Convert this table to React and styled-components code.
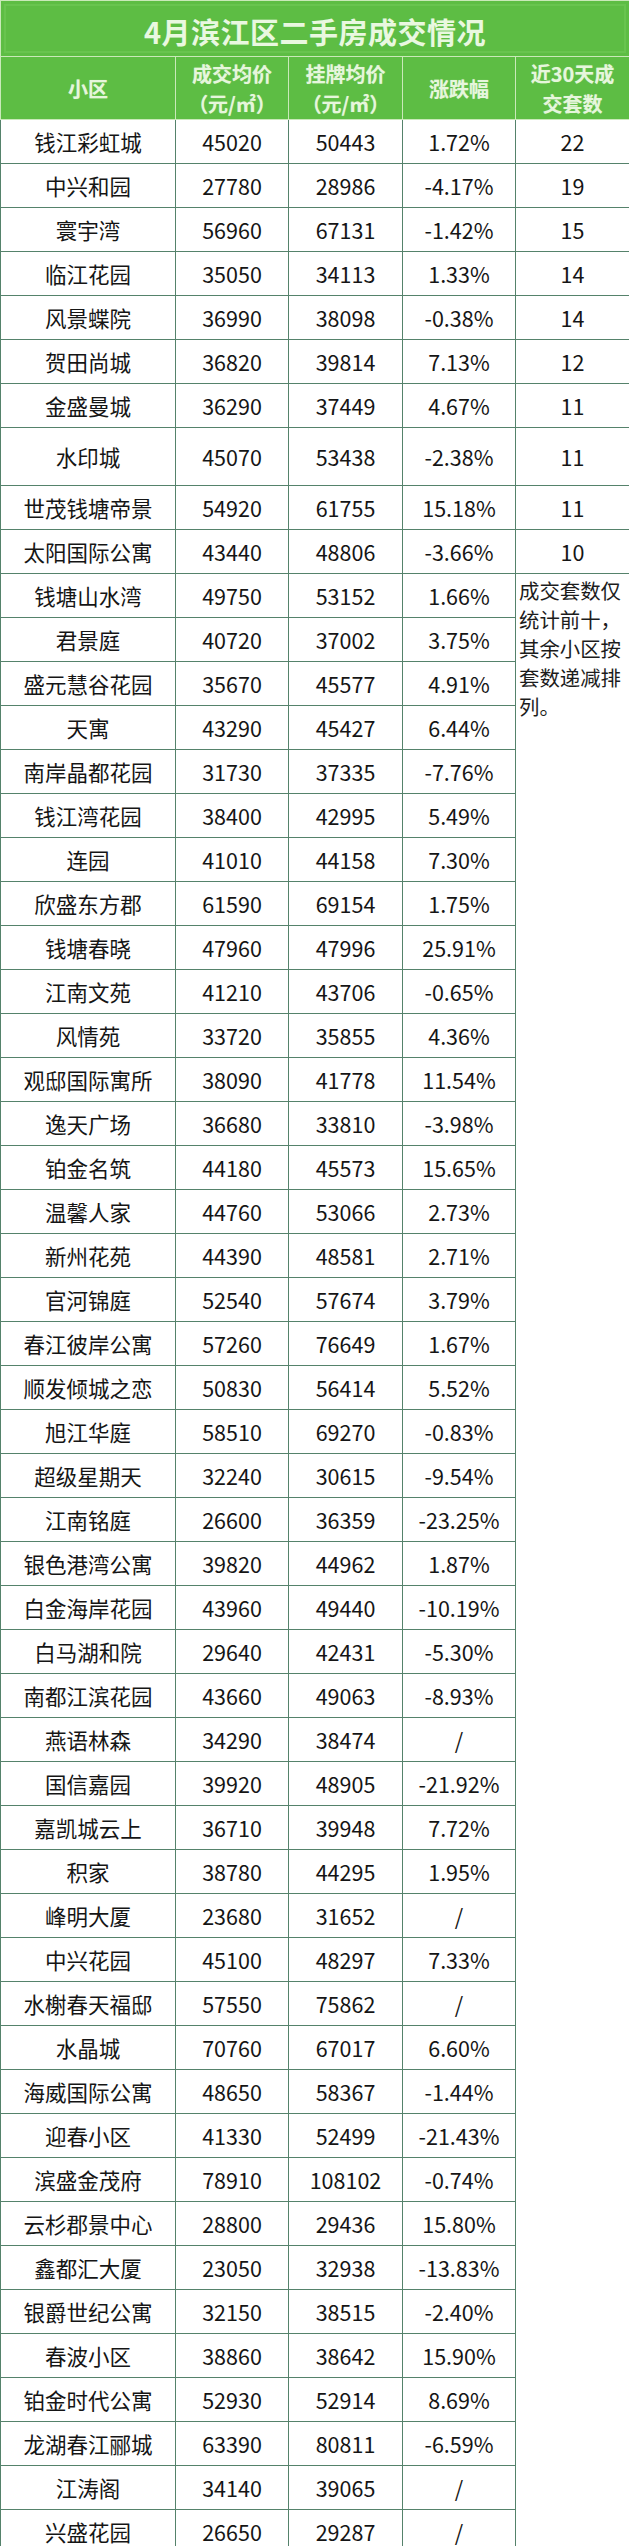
import React from "react";
import styled, { createGlobalStyle } from "styled-components";

const Global = createGlobalStyle`
  html, body { margin: 0; padding: 0; background: #ffffff; }
  body { font-family: "Noto Sans CJK SC", "Noto Sans", sans-serif; }
`;

const rows = [
  ["钱江彩虹城", "45020", "50443", "1.72%", "22"],
  ["中兴和园", "27780", "28986", "-4.17%", "19"],
  ["寰宇湾", "56960", "67131", "-1.42%", "15"],
  ["临江花园", "35050", "34113", "1.33%", "14"],
  ["风景蝶院", "36990", "38098", "-0.38%", "14"],
  ["贺田尚城", "36820", "39814", "7.13%", "12"],
  ["金盛曼城", "36290", "37449", "4.67%", "11"],
  ["水印城", "45070", "53438", "-2.38%", "11"],
  ["世茂钱塘帝景", "54920", "61755", "15.18%", "11"],
  ["太阳国际公寓", "43440", "48806", "-3.66%", "10"],
  ["钱塘山水湾", "49750", "53152", "1.66%"],
  ["君景庭", "40720", "37002", "3.75%"],
  ["盛元慧谷花园", "35670", "45577", "4.91%"],
  ["天寓", "43290", "45427", "6.44%"],
  ["南岸晶都花园", "31730", "37335", "-7.76%"],
  ["钱江湾花园", "38400", "42995", "5.49%"],
  ["连园", "41010", "44158", "7.30%"],
  ["欣盛东方郡", "61590", "69154", "1.75%"],
  ["钱塘春晓", "47960", "47996", "25.91%"],
  ["江南文苑", "41210", "43706", "-0.65%"],
  ["风情苑", "33720", "35855", "4.36%"],
  ["观邸国际寓所", "38090", "41778", "11.54%"],
  ["逸天广场", "36680", "33810", "-3.98%"],
  ["铂金名筑", "44180", "45573", "15.65%"],
  ["温馨人家", "44760", "53066", "2.73%"],
  ["新州花苑", "44390", "48581", "2.71%"],
  ["官河锦庭", "52540", "57674", "3.79%"],
  ["春江彼岸公寓", "57260", "76649", "1.67%"],
  ["顺发倾城之恋", "50830", "56414", "5.52%"],
  ["旭江华庭", "58510", "69270", "-0.83%"],
  ["超级星期天", "32240", "30615", "-9.54%"],
  ["江南铭庭", "26600", "36359", "-23.25%"],
  ["银色港湾公寓", "39820", "44962", "1.87%"],
  ["白金海岸花园", "43960", "49440", "-10.19%"],
  ["白马湖和院", "29640", "42431", "-5.30%"],
  ["南都江滨花园", "43660", "49063", "-8.93%"],
  ["燕语林森", "34290", "38474", "/"],
  ["国信嘉园", "39920", "48905", "-21.92%"],
  ["嘉凯城云上", "36710", "39948", "7.72%"],
  ["积家", "38780", "44295", "1.95%"],
  ["峰明大厦", "23680", "31652", "/"],
  ["中兴花园", "45100", "48297", "7.33%"],
  ["水榭春天福邸", "57550", "75862", "/"],
  ["水晶城", "70760", "67017", "6.60%"],
  ["海威国际公寓", "48650", "58367", "-1.44%"],
  ["迎春小区", "41330", "52499", "-21.43%"],
  ["滨盛金茂府", "78910", "108102", "-0.74%"],
  ["云杉郡景中心", "28800", "29436", "15.80%"],
  ["鑫都汇大厦", "23050", "32938", "-13.83%"],
  ["银爵世纪公寓", "32150", "38515", "-2.40%"],
  ["春波小区", "38860", "38642", "15.90%"],
  ["铂金时代公寓", "52930", "52914", "8.69%"],
  ["龙湖春江郦城", "63390", "80811", "-6.59%"],
  ["江涛阁", "34140", "39065", "/"],
  ["兴盛花园", "26650", "29287", "/"],
];

const GREEN = "#5dbd44";
const LINE = "#55826b";
const HEAD_LINE = "#c9e9b9";

const Page = styled.div`
  width: 629px;
`;

const Table = styled.table`
  width: 629px;
  border-collapse: collapse;
  table-layout: fixed;
`;

const TitleCell = styled.th`
  height: 51px;
  padding: 4px 0 0;
  background: ${GREEN};
  color: #e9f8e0;
  font-size: 29px;
  font-weight: 700;
  letter-spacing: 0.5px;
  text-align: center;
  border: 1px solid ${HEAD_LINE};
  box-shadow: inset 0 0 0 3px ${GREEN}, inset 0 0 0 5px #68c44f;
`;

const HeadCell = styled.th`
  height: 59px;
  padding: 2px 0 0;
  background: ${GREEN};
  color: #e6f6dc;
  font-size: 20px;
  font-weight: 700;
  line-height: 30px;
  text-align: center;
  vertical-align: middle;
  border: 1px solid ${HEAD_LINE};
  text-shadow: 0 0 1px rgba(255, 255, 255, 0.4);
`;

const Row = styled.tr`
  height: ${(p) => p.$h}px;
`;

const Cell = styled.td`
  padding: 0;
  border: 1px solid ${LINE};
  color: #151515;
  font-size: 21.5px;
  text-align: center;
  vertical-align: middle;
  white-space: nowrap;
`;

const NoteCell = styled.td`
  padding: 2px 0 0 3px;
  border: 1px solid ${LINE};
  color: #1c1c1c;
  font-size: 20.4px;
  line-height: 29px;
  text-align: left;
  vertical-align: top;
`;

export default function App() {
  return (
    <Page>
      <Global />
      <Table>
        <colgroup>
          <col style={{ width: 175 }} />
          <col style={{ width: 113 }} />
          <col style={{ width: 114 }} />
          <col style={{ width: 113 }} />
          <col style={{ width: 114 }} />
        </colgroup>
        <thead>
          <tr>
            <TitleCell colSpan={5}>4月滨江区二手房成交情况</TitleCell>
          </tr>
          <tr>
            <HeadCell>小区</HeadCell>
            <HeadCell>
              成交均价
              <br />
              （元/㎡）
            </HeadCell>
            <HeadCell>
              挂牌均价
              <br />
              （元/㎡）
            </HeadCell>
            <HeadCell>涨跌幅</HeadCell>
            <HeadCell>
              近30天成
              <br />
              交套数
            </HeadCell>
          </tr>
        </thead>
        <tbody>
          {rows.map((r, i) => (
            <Row key={r[0]} $h={r[0] === "水印城" ? 58 : 44}>
              <Cell>{r[0]}</Cell>
              <Cell>{r[1]}</Cell>
              <Cell>{r[2]}</Cell>
              <Cell>{r[3]}</Cell>
              {i < 10 && <Cell>{r[4]}</Cell>}
              {i === 10 && (
                <NoteCell rowSpan={rows.length - 10}>
                  成交套数仅
                  <br />
                  统计前十，
                  <br />
                  其余小区按
                  <br />
                  套数递减排
                  <br />
                  列。
                </NoteCell>
              )}
            </Row>
          ))}
        </tbody>
      </Table>
    </Page>
  );
}
